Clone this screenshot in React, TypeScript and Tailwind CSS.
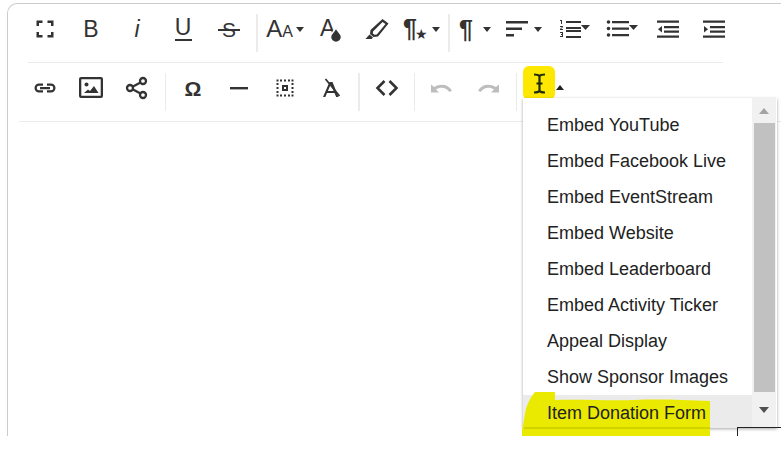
import React from 'react';

const items = [
  'Embed YouTube',
  'Embed Facebook Live',
  'Embed EventStream',
  'Embed Website',
  'Embed Leaderboard',
  'Embed Activity Ticker',
  'Appeal Display',
  'Show Sponsor Images',
  'Item Donation Form',
];

function Btn({ w = 'w-[46px]', children }: { w?: string; children: React.ReactNode }) {
  return <div className={`${w} h-[42px] shrink-0 flex items-center justify-center text-[#333]`}>{children}</div>;
}

function Sep({ thin = false }: { thin?: boolean }) {
  return (
    <div className="w-[10px] h-[38px] mt-[6px] shrink-0 flex justify-center">
      <div className={`${thin ? 'w-px' : 'w-[2px]'} h-full bg-[#ebebeb]`} />
    </div>
  );
}

function Caret() {
  return <span className="ml-[3px] w-0 h-0 border-x-[4.5px] border-x-transparent border-t-[5px] border-t-[#333]" />;
}

function Icon({ w = 24, children }: { w?: number; children: React.ReactNode }) {
  return (
    <svg width={w} height={24} viewBox={`0 0 ${w} 24`} fill="#333">
      {children}
    </svg>
  );
}

export default function App() {
  return (
    <div className="relative w-[781px] h-[452px] bg-white overflow-hidden font-['Liberation_Sans',Arial,sans-serif]">
      <div className="mt-[3px] ml-[7px] h-[433px] border-l border-t border-[#cccccc] rounded-tl-[10px]">
        {/* row 1 */}
        <div className="ml-[14px] h-[58px] pt-[4px] flex items-start">
          <Btn>
            <Icon>
              <path d="M3.500 3.500h6v2.500H6v3H3.500zM14.500 3.500h6v5.500H18V6h-3.500zM3.500 15H6v3h3.500v2.500h-6zM18 15h2.500v5.500h-6V18H18z" />
            </Icon>
          </Btn>
          <Btn><span className="text-[23px] leading-none">B</span></Btn>
          <Btn><span className="text-[23px] leading-none italic">i</span></Btn>
          <Btn>
            <div className="flex flex-col items-center">
              <span className="text-[23px] leading-[20px]">U</span>
              <div className="mt-[2px] w-[17px] h-[2px] bg-[#333]" />
            </div>
          </Btn>
          <Btn>
            <div className="relative flex items-center justify-center">
              <span className="text-[21px] leading-none">S</span>
              <div className="absolute left-[-4px] right-[-4px] top-[10px] h-[2px] bg-[#333]" />
            </div>
          </Btn>
          <Sep />
          <Btn>
            <span className="text-[24px] leading-none">A</span>
            <span className="text-[16px] leading-none mt-[6px]">A</span>
            <Caret />
          </Btn>
          <Btn>
            <div className="relative w-[22px] h-[28px]">
              <span className="absolute left-0 top-[2px] text-[23px] leading-none">A</span>
              <svg className="absolute left-[9px] top-[12px]" width="14" height="16" viewBox="0 0 14 16" fill="#333" stroke="#fff" strokeWidth="1.500">
                <path d="M7 .8C6 3.500 1.500 6.500 1.500 10a5.500 5.500 0 0 0 11 0C12.500 6.500 8 3.500 7 .8z" />
              </svg>
            </div>
          </Btn>
          <Btn>
            <Icon>
              <path fillRule="evenodd" d="M17.500 2l6 4.500-10.500 13-4.500.5-3.500-3 .5-4zM17.500 5L8 14.500l-.2 2 1.700 1.300 2.300-.3L20.500 7z" />
              <path d="M.5 22l4-4.500 3.500 3-1.500 1.500z" />
            </Icon>
          </Btn>
          <Btn w="w-[44px]">
            <div className="relative w-[25px] h-[26px]">
              <span className="absolute left-[-1px] top-[0px] text-[25px] leading-none font-bold">¶</span>
              <span className="absolute left-[11px] top-[11px] text-[14px] leading-none font-['DejaVu_Sans']">★</span>
            </div>
            <Caret />
          </Btn>
          <Sep />
          <Btn w="w-[44px]">
            <span className="text-[25px] leading-none ml-[-2px] font-bold">¶</span>
            <span className="w-[7px]" />
            <Caret />
          </Btn>
          <Btn w="w-[51px]">
            <Icon>
              <path d="M1 4h22v2.500H1zM1 10.500h16V13H1zM1 17h8v2.500H1z" />
            </Icon>
            <span className="w-[2px]" />
            <Caret />
          </Btn>
          <Btn w="w-[50px]">
            <svg width="31" height="24" viewBox="0 0 31 24" fill="#333">
              <path d="M7 4h15v2H7zM7 10h15v2H7zM7 13h15v2H7zM7 19h15v2H7zM1 3h2v4H2V4H1zM1 9h3v1l-2 2h2v1H1v-1l2-2H1zM1 15h3v5H1v-1h2v-1H2v-1h1v-1H1z" />
              <path d="M22 8h9l-4.500 5z" />
            </svg>
          </Btn>
          <Btn>
            <svg width="32" height="24" viewBox="0 0 32 24" fill="#333">
              <path d="M6 4h17v2.300H6zM6 10.500h17v2.300H6zM6 17h17v2.300H6z" />
              <circle cx="2.500" cy="5" r="1.800" />
              <circle cx="2.500" cy="11.500" r="1.800" />
              <circle cx="2.500" cy="18" r="1.800" />
              <path d="M23 8h9l-4.500 5z" />
            </svg>
          </Btn>
          <Btn>
            <Icon>
              <path d="M1 3.500h22v2.300H1zM8 9h15v2.300H8zM8 13.500h15v2.300H8zM1 18.500h22v2.300H1zM6 9v6.500l-4-3.200z" />
            </Icon>
          </Btn>
          <Btn>
            <Icon>
              <path d="M1 3.500h22v2.300H1zM8 9h15v2.300H8zM8 13.500h15v2.300H8zM1 18.500h22v2.300H1zM2 9v6.500l4-3.200z" />
            </Icon>
          </Btn>
        </div>
        <div className="ml-[20px] w-[695px] h-px bg-[#ebebeb]" />
        {/* row 2 */}
        <div className="ml-[11px] h-[59px] border-b border-[#ebebeb] flex items-start pt-[4px]">
          <div className="w-[3px]" />
          <Btn>
            <Icon>
              <path d="M10 7.500H6a4.500 4.500 0 0 0 0 9h4v-2.200H6a2.300 2.300 0 0 1 0-4.600h4zM14 7.500h4a4.500 4.500 0 0 1 0 9h-4v-2.200h4a2.300 2.300 0 0 0 0-4.600h-4zM7 11h10v2.200H7z" />
            </Icon>
          </Btn>
          <Btn>
            <Icon>
              <path fillRule="evenodd" d="M2 1h20a2 2 0 0 1 2 2v17a2 2 0 0 1-2 2H2a2 2 0 0 1-2-2V3a2 2 0 0 1 2-2zm.3 2.300v16.400h19.400V3.300z" />
              <circle cx="7.500" cy="8.500" r="2" />
              <path d="M5 17l4-3.500 2 1.500 4-5 4.500 7z" />
            </Icon>
          </Btn>
          <Btn>
            <Icon>
              <g fill="none" stroke="#333" strokeWidth="2.300">
                <circle cx="5" cy="12" r="3" />
                <circle cx="18" cy="5" r="3" />
                <circle cx="18" cy="19" r="3" />
                <path d="M8 10.500l7.500-4M8 13.500l7.500 4" />
              </g>
            </Icon>
          </Btn>
          <Sep thin />
          <Btn><span className="text-[21px] leading-none font-bold">Ω</span></Btn>
          <Btn>
            <Icon>
              <path d="M3 11h18v2.400H3z" />
            </Icon>
          </Btn>
          <Btn>
            <Icon>
              <path fillRule="evenodd" d="M9 9h6v6H9zm2 2v2h2v-2z" />
              <path d="M3.500 3.500h2v2h-2zM7 3.500h2v2H7zM11 3.500h2v2h-2zM15 3.500h2v2h-2zM18.500 3.500h2v2h-2zM3.500 7h2v2h-2zM18.500 7h2v2h-2zM3.500 11h2v2h-2zM18.500 11h2v2h-2zM3.500 15h2v2h-2zM18.500 15h2v2h-2zM3.500 18.500h2v2h-2zM7 18.500h2v2H7zM11 18.500h2v2h-2zM15 18.500h2v2h-2zM18.500 18.500h2v2h-2z" />
            </Icon>
          </Btn>
          <Btn>
            <Icon>
              <path d="M10.500 6L4 21h2.300l1.700-4h7.500l1.700 4h2.300L13.500 6zM8.900 15L11.800 8.200 14.700 15z" fillRule="evenodd" />
              <path d="M6.500 3l14 17" stroke="#333" strokeWidth="1.800" fill="none" />
            </Icon>
          </Btn>
          <Sep />
          <Btn w="w-[45px]">
            <Icon>
              <path d="M9.500 5L2.500 12l7 7M14.500 5l7 7-7 7" fill="none" stroke="#333" strokeWidth="2.600" />
            </Icon>
          </Btn>
          <Sep thin />
          <Btn>
            <Icon>
              <path fill="#bdbdbd" d="M1 8.500v8h8l-3-3c4-3 10-2.500 13.500 2.500l2.500-1.500C18 8 11 7 4 11z" />
            </Icon>
          </Btn>
          <Btn>
            <Icon>
              <path fill="#bdbdbd" d="M23 8.500v8h-8l3-3c-4-3-10-2.500-13.500 2.500L2 14.500C6 8 13 7 20 11z" />
            </Icon>
          </Btn>
          <Sep thin />
        </div>
      </div>

      {/* plugin button with marker */}
      <div className="absolute left-[523px] top-[66px] w-[32px] h-[34px] rounded-[6px] bg-[#ffe800] flex items-center justify-center">
        <svg width="13" height="21" viewBox="0 0 13 21" fill="none" stroke="#1f2a10" strokeWidth="2.200">
          <path d="M1 1.500c2 0 4.500.3 5.500 1.500 1-1.200 3.500-1.500 5.500-1.500M1 19.500c2 0 4.500-.3 5.500-1.500 1 1.200 3.500 1.500 5.500 1.500M6.500 3v15M3.500 10.500h6" />
        </svg>
      </div>
      <div className="absolute left-[556px] top-[85px] w-0 h-0 border-x-[4.500px] border-x-transparent border-b-[5px] border-b-[#222]" />

      {/* dropdown */}
      <div className="absolute left-[523px] top-[98px] w-[254px] h-[330px] bg-white overflow-hidden flex shadow-[0_1px_3px_rgba(0,0,0,0.35)]">
        <div className="w-[229px] pt-[9px] shrink-0">
          {items.map((item, i) => (
            <div
              key={item}
              className={`h-[36px] pl-[24px] flex items-center text-[18px] text-[#222] whitespace-nowrap ${i === 8 ? 'bg-[#ebebeb]' : ''}`}
            >
              <span className="relative z-20">{item}</span>
            </div>
          ))}
        </div>
        <div className="w-[24px] bg-[#f1f1f1] flex flex-col items-center">
          <div className="h-[25px] flex items-center justify-center">
            <div className="w-0 h-0 border-x-[5.5px] border-x-transparent border-b-[6px] border-b-[#a3a3a3]" />
          </div>
          <div className="w-[21px] h-[269px] bg-[#c1c1c1]" />
          <div className="flex-1 flex items-center justify-center">
            <div className="w-0 h-0 border-x-[5.5px] border-x-transparent border-t-[6px] border-t-[#505050]" />
          </div>
        </div>
      </div>

      {/* hand drawn highlight over last item */}
      <svg className="absolute left-[520px] top-[388px] z-10" width="195" height="50" viewBox="0 0 195 50">
        <path
          d="M15 4l20 0 0 8c30-1 50 1 80 0 20-1 50 0 75 1l0 35-188 0 0-6 3-16c1-8 5-16 10-22z"
          fill="#eaea00"
        />
        <path d="M4 40h186" stroke="#a8a800" strokeWidth="1" opacity="0.7" />
      </svg>

      {/* corner of the box behind the page */}
      <div className="absolute left-[737px] top-[427px] w-[44px] h-[9px] border-l border-t border-[#222]" />
    </div>
  );
}
